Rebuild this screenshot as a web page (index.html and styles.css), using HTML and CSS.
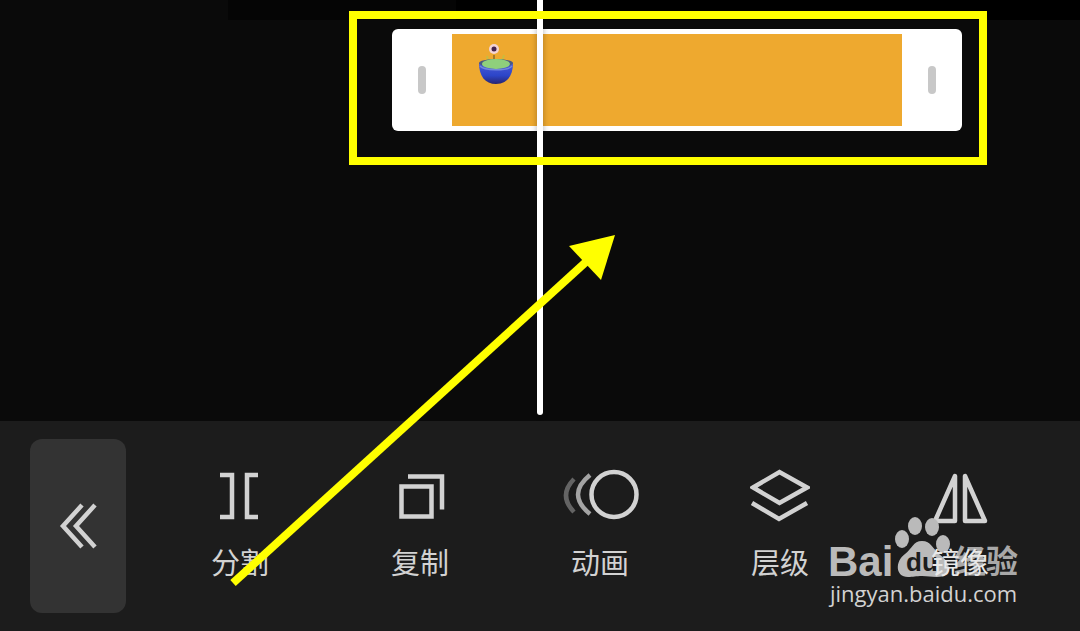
FILE: index.html
```
<!DOCTYPE html>
<html lang="zh-CN">
<head>
    <meta charset="UTF-8">
    <meta name="viewport" content="width=device-width, initial-scale=1.0">
    <title>剪辑</title>
    <link rel="stylesheet" href="styles.css">
</head>
<body>
    <div class="editor">
        <!-- Timeline -->
        <main class="timeline">
            <div class="upper-track"></div>
            <div class="clip">
                <div class="handle"></div>
                <div class="clip-body">
                    <svg class="sticker" viewBox="0 0 36 44">
                        <defs>
                            <linearGradient id="bowlFill" x1="0" y1="0" x2="0" y2="1">
                                <stop offset="0" stop-color="#4a5bd8"/>
                                <stop offset="0.6" stop-color="#2c45c8"/>
                                <stop offset="1" stop-color="#28246e"/>
                            </linearGradient>
                        </defs>
                        <path d="M16 12v8" stroke="#8a6a30" stroke-width="1.5"/>
                        <path d="M9 13l1 5M26 12l-2 6" stroke="#cbbb3c" stroke-width="2"/>
                        <path d="M1 20c0 13 6 21 17 21s17-8 17-21z" fill="url(#bowlFill)"/>
                        <ellipse cx="18" cy="20" rx="17" ry="4" fill="#4a5a80"/>
                        <ellipse cx="18" cy="21" rx="14" ry="5" fill="#8fd07c"/>
                        <path d="M2 23c4 5 28 5 32 0" fill="none" stroke="#7186dd" stroke-width="1.5"/>
                        <circle cx="16" cy="6" r="5" fill="#f3d3d5"/>
                        <circle cx="16" cy="6" r="2.5" fill="#43234f"/>
                    </svg>
                </div>
                <div class="handle"></div>
                <div class="highlight"></div>
            </div>
            <div class="playhead"></div>
        </main>

        <!-- Bottom tools -->
        <nav class="toolbar">
            <button class="back" aria-label="返回">
                <svg width="48" height="48" viewBox="0 0 48 48">
                    <path d="M28 3L9 24l19 21M41 3L22 24l19 21"/>
                </svg>
            </button>
            <div class="tools">
                <button class="tool">
                    <svg viewBox="0 0 60 60">
                        <path d="M10 9h12v42H10M48 9H37v42h11"/>
                    </svg>
                    <span>分割</span>
                </button>
                <button class="tool">
                    <svg viewBox="0 0 60 60">
                        <path d="M11.500 20.500h30v30h-30zM18 10.500h34v33"/>
                    </svg>
                    <span>复制</span>
                </button>
                <button class="tool">
                    <svg class="wide" viewBox="0 0 80 60">
                        <circle cx="54" cy="28.500" r="22.500"/>
                        <path d="M30 9q-24 19.500 0 39" opacity="0.75"/>
                        <path d="M14 13q-16 16.500 0 33" opacity="0.4"/>
                    </svg>
                    <span>动画</span>
                </button>
                <button class="tool">
                    <svg viewBox="0 0 60 60">
                        <path d="M3 21.500L29.500 6 57 21.500 29.500 37zM2 37L29 53l28-16"/>
                    </svg>
                    <span>层级</span>
                </button>
                <button class="tool">
                    <svg viewBox="0 0 60 60">
                        <path d="M25 10v45H5zM35 10v45h20z" stroke-linejoin="round"/>
                    </svg>
                    <span>镜像</span>
                </button>
            </div>
        </nav>

        <!-- Tutorial arrow -->
        <svg class="arrow" viewBox="0 0 386 352">
            <path d="M3 348L357 26" stroke="#ffff00" stroke-width="8"/>
            <path d="M385 0L339 11 371 45z" fill="#ffff00"/>
        </svg>

        <!-- Watermark -->
        <svg class="watermark" viewBox="0 0 200 100">
            <ellipse cx="72" cy="28" rx="7" ry="9"/>
            <ellipse cx="85" cy="15" rx="7" ry="9"/>
            <ellipse cx="102" cy="16" rx="7" ry="9"/>
            <ellipse cx="113" cy="33" rx="7" ry="9"/>
            <path d="M92 30c9 0 11 8 17 13 14 10 13 23-2 23-6 0-9-1-15-1s-9 1-14 1c-13 0-13-16-3-23 7-5 8-13 17-13z"/>
            <text class="wm-brand" x="-2" y="65">Bai</text>
            <text class="wm-du" x="76" y="60">du</text>
            <text class="wm-cn" x="124" y="62">经验</text>
            <text class="wm-url" x="0" y="91">jingyan.baidu.com</text>
        </svg>
    </div>
</body>
</html>
```
FILE: styles.css
```
* {
    margin: 0;
    padding: 0;
    box-sizing: border-box;
}
body {
    font-family: "Noto Sans CJK SC", sans-serif;
    background: #0a0a0a;
    color: #d2d2d2;
}
button {
    border: none;
    background: none;
    color: inherit;
    font: inherit;
    cursor: pointer;
}
.editor {
    position: relative;
    display: flex;
    flex-direction: column;
    min-height: 100vh;
    overflow: hidden;
}

/* Timeline */
.timeline {
    position: relative;
    flex: 1;
    min-height: 240px;
}
.upper-track {
    height: 20px;
    margin-left: calc(50% - 312px);
    background: linear-gradient(90deg, #050505 228px, #000 228px);
}
.clip {
    position: relative;
    display: flex;
    width: 570px;
    height: 102px;
    margin-top: 9px;
    margin-left: calc(50% - 148px);
    padding: 5px 0;
    background: #fff;
    border-radius: 6px;
}
.handle {
    display: flex;
    align-items: center;
    justify-content: center;
    width: 60px;
}
.handle::before {
    content: '';
    width: 8px;
    height: 28px;
    border-radius: 4px;
    background: #c8c8c8;
}
.clip-body {
    flex: 1;
    padding: 9px 26px;
    background: #eea92f;
}
.sticker {
    display: block;
    width: 36px;
    height: 44px;
}
.playhead {
    position: absolute;
    top: 0;
    bottom: 6px;
    left: calc(50% - 3px);
    width: 6px;
    background: #fff;
    border-radius: 0 0 3px 3px;
    box-shadow: 0 0 6px rgba(0, 0, 0, 0.3);
}
.highlight {
    position: absolute;
    z-index: 1;
    top: -18px;
    right: -25px;
    bottom: -34px;
    left: -43px;
    border: 8px solid #ffff00;
}

/* Toolbar */
.toolbar {
    display: flex;
    gap: 24px;
    padding: 18px 30px;
    background: #1c1c1c;
}
.toolbar svg {
    fill: none;
    stroke: #d2d2d2;
    stroke-width: 4.5;
}
.back {
    display: flex;
    align-items: center;
    justify-content: center;
    width: 96px;
    height: 174px;
    border-radius: 12px;
    background: #333;
}
.tools {
    flex: 1;
    display: grid;
    grid-template-columns: repeat(5, 1fr);
}
.tool {
    display: flex;
    flex-direction: column;
    align-items: center;
    gap: 15px;
    padding-top: 27px;
    font-size: 29px;
    line-height: 40px;
}
.tool svg {
    width: 60px;
    height: 60px;
}
.tool .wide {
    width: 80px;
}
.tool span {
    position: relative;
    z-index: 1;
}
.tool:last-child span {
    color: #e8e8e8;
}

/* Overlays */
.arrow {
    position: absolute;
    z-index: 2;
    left: calc(50% - 310px);
    bottom: 44px;
    width: 386px;
    height: 352px;
}
.watermark {
    position: absolute;
    right: 50px;
    bottom: 20px;
    width: 200px;
    height: 100px;
    overflow: visible;
    fill: #bababa;
    pointer-events: none;
}
.wm-brand {
    font: bold 42px "Liberation Sans", sans-serif;
}
.wm-du {
    font: bold 26px "Liberation Sans", sans-serif;
    fill: #1c1c1c;
}
.wm-cn {
    font: bold 32px "Noto Sans CJK SC", sans-serif;
    fill: #a8a8a8;
}
.wm-url {
    font: 500 22px "Open Sans", sans-serif;
    fill: #d2d2d2;
}
```
